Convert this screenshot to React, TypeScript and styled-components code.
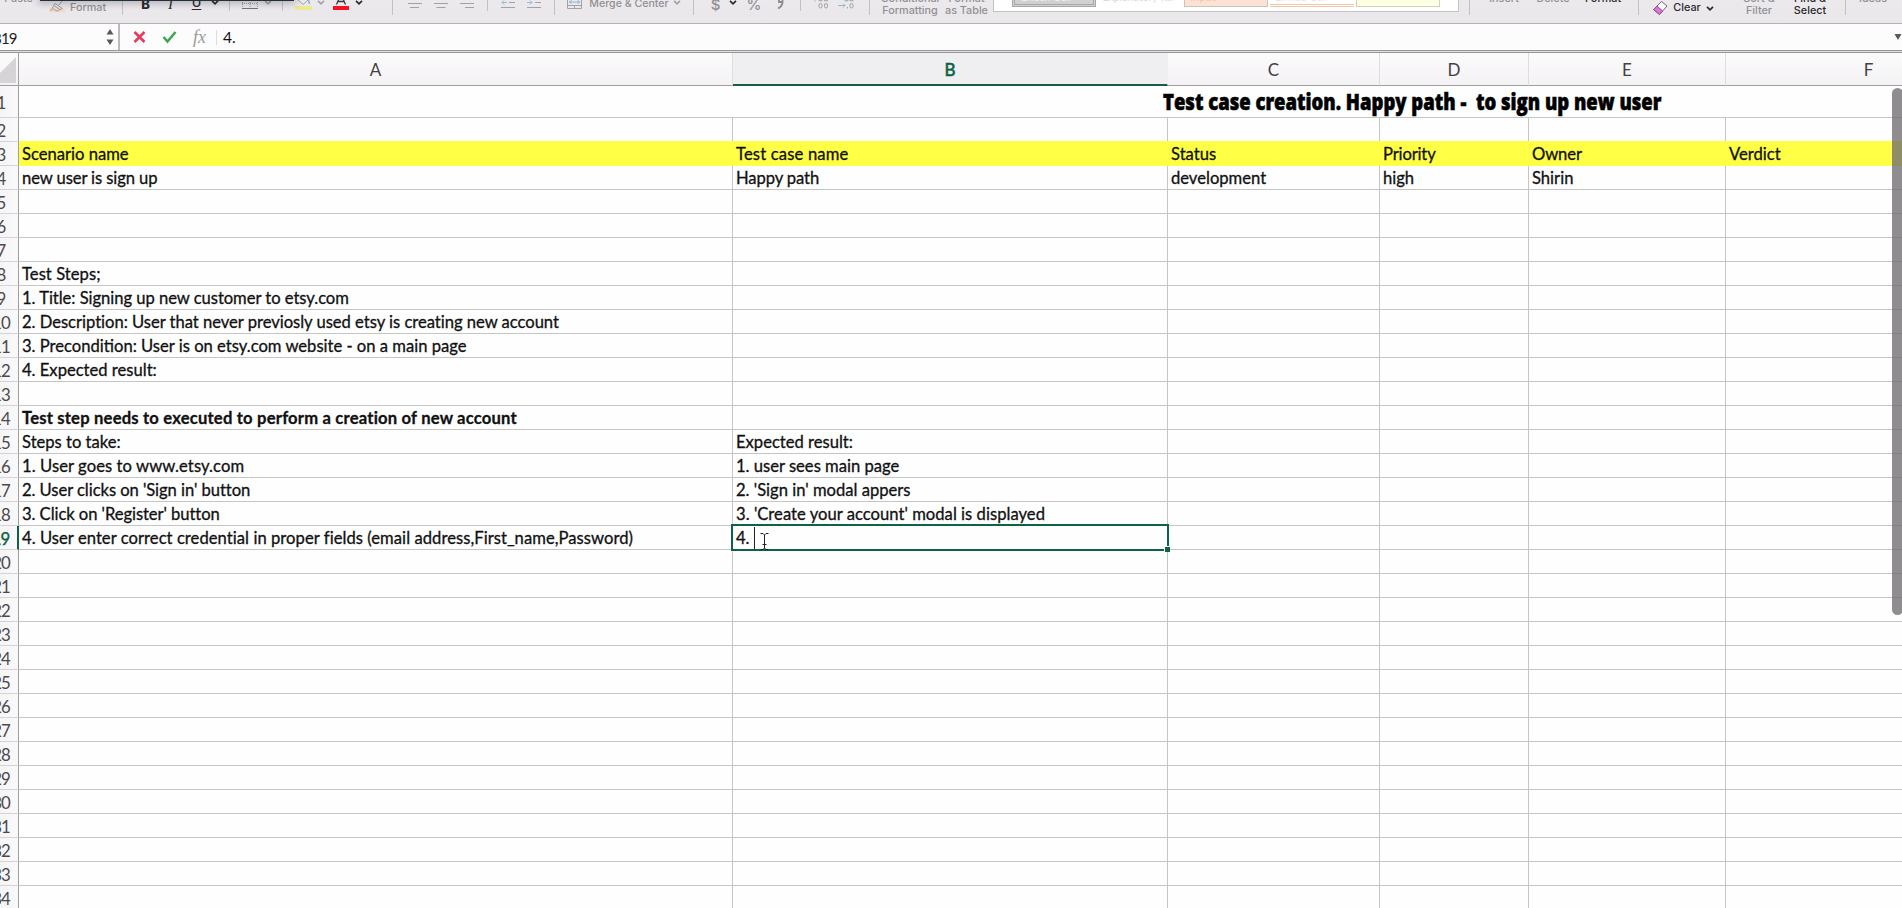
import React from 'react';
import styled, { createGlobalStyle, css } from 'styled-components';

const GREEN = '#0d6444';
const LINE = '#c6c5c6';

const GlobalStyle = createGlobalStyle`
  * { box-sizing: border-box; }
  body { margin: 0; background: #fff; overflow: hidden; }
`;

const Window = styled.div`
  position: relative;
  display: flex;
  flex-direction: column;
  width: 1902px;
  height: 908px;
  overflow: hidden;
  background: #fefefe;
  font-family: Lato, 'Liberation Sans', sans-serif;
  color: #111;
`;

/* ---------- ribbon ---------- */

const Ribbon = styled.div`
  display: flex;
  align-items: flex-end;
  flex: none;
  height: 24px;
  overflow: hidden;
  background: linear-gradient(#ebe9ec, #e9e7ea);
  border-bottom: 1px solid #b4b2b5;
`;

interface SlotProps { $gap: number; $w: number }
const slot = css<SlotProps>`
  flex: none;
  margin-left: ${p => p.$gap}px;
  width: ${p => p.$w}px;
`;

const Caption = styled.div<SlotProps & { $lift: number; $dark?: boolean; $size?: number }>`
  ${slot}
  display: flex;
  flex-direction: column;
  align-items: center;
  padding-bottom: ${p => p.$lift}px;
  font: 500 ${p => p.$size ?? 10.8}px/12px Inter, sans-serif;
  white-space: nowrap;
  color: ${p => (p.$dark ? '#2b292c' : '#929094')};
`;

const StyleLetter = styled(Caption)<{ $kind?: 'bold' | 'italic' | 'under' }>`
  font-size: 13px;
  ${p => p.$kind === 'bold' && 'font-weight: 800;'}
  ${p => p.$kind === 'italic' && "font-family: 'Liberation Serif', serif; font-style: italic; font-size: 15px;"}
  ${p => p.$kind === 'under' && 'text-decoration: underline; text-underline-offset: 2px;'}
`;

const Divider = styled.div<{ $gap: number; $short?: boolean }>`
  flex: none;
  width: 1px;
  height: ${p => (p.$short ? 11 : 15)}px;
  align-self: flex-start;
  margin-left: ${p => p.$gap}px;
  background: #c3c1c4;
`;

const Glyph = styled.svg<SlotProps>`
  ${slot}
  height: 23px;
  fill: none;
  stroke: #a3a1a5;
`;

const ChevronSvg = styled(Glyph)<{ $dark?: boolean }>`
  stroke: ${p => (p.$dark ? '#2b292c' : '#a5a3a7')};
  stroke-width: 1.7;
`;

const Chevron = ({ gap, y = 1, dark }: { gap: number; y?: number; dark?: boolean }) => (
  <ChevronSvg $gap={gap} $w={8} $dark={dark} viewBox="0 0 8 23">
    <path d={`M1 ${y - 0.2}L4 ${y + 2.8}L7 ${y - 0.2}`} />
  </ChevronSvg>
);

const Gallery = styled.div`
  display: flex;
  gap: 2px;
  flex: none;
  align-self: flex-start;
  width: 466px;
  height: 12px;
  margin-left: 5px;
  padding-left: 18px;
  background: #fff;
  border: 1px solid #c4c2c5;
  border-top: 0;
`;

const Swatch = styled.div<{ $look: 'check' | 'explain' | 'input' | 'linked' | 'note' }>`
  width: 84px;
  height: 7px;
  overflow: hidden;
  padding-left: 5px;
  font: 11px/12px Lato, sans-serif;
  white-space: nowrap;
  ${p => p.$look === 'check' && 'background:#d2d1d2; border:3px double #a8a7a8; border-top:0; color:#f1f0f1;'}
  ${p => p.$look === 'explain' && 'color:#d9d8d9; font-style:italic;'}
  ${p => p.$look === 'input' && 'background:#fde2d3; border:1px solid #c9c3c1; border-top:0; color:#f2c7ae;'}
  ${p => p.$look === 'linked' && 'border-bottom:3px double #f5c4a8; color:#fbdfce;'}
  ${p => p.$look === 'note' && 'background:#ffffe2; border:1px solid #cfcfc6; border-top:0;'}
`;

const SwatchText = styled.div`
  margin-top: -9px;
`;

const OverlayStrip = styled.div`
  position: absolute;
  left: 40px;
  top: 0;
  width: 254px;
  height: 1px;
  background: #24313d;
  box-shadow: 0 0 7px 2px rgba(30, 30, 40, 0.35);
`;

/* ---------- formula bar ---------- */

const FormulaBar = styled.div`
  display: flex;
  align-items: center;
  flex: none;
  height: 29px;
  padding-bottom: 3px;
  background: linear-gradient(#fdfcfd 26px, #989698 26px, #989698 27px, #e2e0e2 27px, #e2e0e2 28px, #989698 28px);
  font-size: 15.6px;
`;

const NameBox = styled.div`
  display: flex;
  align-items: center;
  justify-content: space-between;
  flex: none;
  width: 120px;
  height: 26px;
  padding-right: 4px;
  border-right: 2px solid #bbb9bb;
  color: #222;
`;

const CellRef = styled.span`
  margin-left: -8px;
  padding-top: 2px;
  font-size: 15px;
  letter-spacing: -0.8px;
`;

const Stepper = styled.svg`
  width: 8px;
  height: 18px;
  fill: #59575a;
`;

const BarIcon = styled.svg<SlotProps & { $color: string }>`
  ${slot}
  height: 14px;
  fill: none;
  stroke: ${p => p.$color};
  stroke-width: 2.6;
`;

const FxLabel = styled.span`
  flex: none;
  width: 22px;
  margin-left: 16px;
  font: italic 18px/22px 'Liberation Serif', serif;
  color: #9b999c;
`;

const Formula = styled.span`
  flex: 1;
  margin-left: 1px;
  padding-left: 6px;
  border-left: 1px solid #dddbdd;
  line-height: 15px;
`;

const Expand = styled.svg`
  flex: none;
  width: 8px;
  height: 8px;
  fill: #59575a;
`;

/* ---------- sheet ---------- */

const COLUMNS = '35px 714px 435px 212px 149px 197px 286px';

const Sheet = styled.div`
  position: relative;
  flex: none;
  width: 2028px;
  margin-left: -16px;
`;

const HeaderRow = styled.div`
  display: grid;
  grid-template: 33px / ${COLUMNS};
  background: linear-gradient(#fcfbfc, #f4f2f4);
`;

const ColumnHead = styled.div<{ $active?: boolean }>`
  border-right: 1px solid #dfdddf;
  border-bottom: 1px solid #a09ea0;
  text-align: center;
  font-size: 17px;
  line-height: 33px;
  color: #434144;
  ${p => p.$active && css`
    background: #efeef0;
    color: ${GREEN};
    -webkit-text-stroke: 0.6px ${GREEN};
    border-right-color: transparent;
    border-bottom: 2px solid #1a5c41;
  `}
`;

const Corner = styled.div`
  display: flex;
  justify-content: flex-end;
  padding: 4px 2px 0 0;
  border-right: 1px solid #a09ea0;
  border-bottom: 1px solid #a09ea0;
`;

const CornerMark = styled.svg`
  width: 26px;
  height: 26px;
  fill: #d6d4d7;
`;

const Row = styled.div<{ $h?: number }>`
  display: grid;
  grid-template: ${p => p.$h ?? 24}px / ${COLUMNS};
`;

const RowHead = styled.div<{ $active?: boolean }>`
  display: flex;
  align-items: center;
  justify-content: center;
  padding-top: 2px;
  background: linear-gradient(90deg, #f3f1f3, #faf9fa);
  border-right: 1px solid #a09ea0;
  border-bottom: 1px solid #d5d3d5;
  font-size: 16.8px;
  letter-spacing: -0.9px;
  color: #4b494c;
  ${p => p.$active && css`
    color: ${GREEN};
    -webkit-text-stroke: 0.4px ${GREEN};
    border-right: 2px solid ${GREEN};
  `}
`;

const Cell = styled.div<{ $fill?: boolean; $bold?: boolean; $track?: number }>`
  padding-left: 3px;
  border-right: 1px solid ${LINE};
  border-bottom: 1px solid ${LINE};
  font-size: 16.6px;
  font-weight: ${p => (p.$bold ? 700 : 400)};
  line-height: 25px;
  letter-spacing: ${p => (p.$track ? `${p.$track}px` : 'normal')};
  white-space: pre;
  -webkit-text-stroke: 0.3px #111;
  ${p => p.$fill && css`
    background: #ffff45;
    border-color: #ffff45;
    box-shadow: 0 -1px 0 #ffff45;
  `}
`;

const TitleCell = styled.div`
  grid-column: 2 / -1;
  padding-left: 1144px;
  border-bottom: 1px solid ${LINE};
`;

const Title = styled.span`
  display: inline-block;
  font: 800 22px/31px 'Open Sans', sans-serif;
  white-space: pre;
  color: #000;
  -webkit-text-stroke: 0.6px #000;
  transform: scaleX(0.84);
  transform-origin: left;
`;

const Selection = styled.div`
  position: absolute;
  left: 747px;
  top: 471px;
  width: 438px;
  height: 27px;
  border: 2px solid ${GREEN};
`;

const FillHandle = styled.div`
  position: absolute;
  right: -3px;
  bottom: -3px;
  width: 6px;
  height: 6px;
  background: ${GREEN};
  border: solid #fff;
  border-width: 1px 0 0 1px;
`;

const Caret = styled.div`
  position: absolute;
  left: 21px;
  top: 1px;
  width: 1px;
  height: 22px;
  background: #222;
`;

const Pointer = styled.svg`
  position: absolute;
  left: 27px;
  top: 7px;
  width: 9px;
  height: 17px;
  fill: none;
  stroke: #222;
`;

const Scrollbar = styled.div`
  position: absolute;
  left: 1892px;
  top: 88px;
  width: 11px;
  height: 527px;
  border-radius: 5.5px;
  background: rgba(112, 109, 111, 0.78);
`;

type Entry = string | [string, number];
const rows: Record<number, Entry[]> = {
  3: ['Scenario name', ['Test case name', 0.16], 'Status', ['Priority', -0.15], ['Owner', -0.1], 'Verdict'],
  4: [['new user is sign up', -0.1], ['Happy path', -0.1], 'development', 'high', 'Shirin'],
  8: [['Test Steps;', 0.05]],
  9: [['1. Title: Signing up new customer to etsy.com', -0.04]],
  10: [['2. Description: User that never previosly used etsy is creating new account', -0.025]],
  11: ['3. Precondition: User is on etsy.com website - on a main page'],
  12: ['4. Expected result:'],
  14: [['Test step needs to executed to perform a creation of new account', 0.2]],
  15: ['Steps to take:', 'Expected result:'],
  16: [['1. User goes to www.etsy.com', 0.08], '1. user sees main page'],
  17: [["2. User clicks on 'Sign in' button", -0.06], "2. 'Sign in' modal appers"],
  18: [["3. Click on 'Register' button", -0.06], ["3. 'Create your account' modal is displayed", 0.03]],
  19: [['4. User enter correct credential in proper fields (email address,First_name,Password)', 0.05], '4. '],
};

const rowNumbers = Array.from({ length: 33 }, (_, i) => i + 2);

function RibbonBar() {
  return (
    <Ribbon>
      <Caption $gap={4} $w={29} $lift={18}>Paste</Caption>
      <Glyph $gap={15} $w={18} viewBox="0 0 18 23">
        <path d="M1 12.500H17V9.500L12 7H7L1 9Z" fill="#f3d9cb" stroke="none" />
        <path d="M14 1L11 5M7 3.500L14.500 8.500M7 3.500L4 8.500L9 11L14.500 8.500M6.500 6L12 9.500M2 10H4" />
      </Glyph>
      <Caption $gap={4} $w={36} $lift={9}>Format</Caption>
      <Divider $gap={16} />
      <StyleLetter $gap={18} $w={9} $lift={13} $dark $kind="bold">B</StyleLetter>
      <StyleLetter $gap={16} $w={9} $lift={13} $dark $kind="italic">I</StyleLetter>
      <StyleLetter $gap={16} $w={11} $lift={15} $dark $kind="under">U</StyleLetter>
      <Chevron gap={9} dark />
      <Divider $gap={10} $short />
      <Glyph $gap={12} $w={16} viewBox="0 0 16 23">
        <path d="M.5 0V8M8 0V8M15.500 0V8M0 3.500H16" strokeDasharray="1 1" />
        <path d="M0 8.500H16" stroke="#777578" />
      </Glyph>
      <Chevron gap={6} />
      <Divider $gap={10} $short />
      <Glyph $gap={12} $w={17} viewBox="0 0 17 23">
        <path d="M3 0L8 4.500L13 0" />
        <path d="M13.500 0L14.500 4" stroke="#8bb4d4" strokeWidth="1.600" />
        <path d="M0 8H17" stroke="#ece98f" strokeWidth="4" />
      </Glyph>
      <Chevron gap={5} />
      <Glyph $gap={8} $w={16} viewBox="0 0 16 23">
        <path d="M3.500 4.500L5.500 0M12.500 4.500L10.500 0M5 1.500H11" stroke="#3a383b" strokeWidth="1.300" />
        <path d="M0 8H16" stroke="#fb0f25" strokeWidth="4" />
      </Glyph>
      <Chevron gap={6} dark />
      <Divider $gap={29} />
      <Glyph $gap={15} $w={14} viewBox="0 0 14 23"><path d="M0 3.500H14M2 7.500H11" /></Glyph>
      <Glyph $gap={12} $w={14} viewBox="0 0 14 23"><path d="M0 3.500H14M2.500 7.500H11.500" /></Glyph>
      <Glyph $gap={12} $w={14} viewBox="0 0 14 23"><path d="M0 3.500H14M5 7.500H14" /></Glyph>
      <Divider $gap={13} $short />
      <Glyph $gap={13} $w={14} viewBox="0 0 14 23">
        <path d="M8 2.500H14M0 7.500H14" /><path d="M6 2.500H1M3 .5L1 2.500L3 4.500" stroke="#9cb9cf" />
      </Glyph>
      <Glyph $gap={12} $w={14} viewBox="0 0 14 23">
        <path d="M8 2.500H14M0 7.500H14" /><path d="M0 2.500H5M3 .5L5 2.500L3 4.500" stroke="#9cb9cf" />
      </Glyph>
      <Divider $gap={13} />
      <Glyph $gap={12} $w={15} viewBox="0 0 15 23">
        <path d="M.5 0V8.500H14.500V0M.5 5.500H14.500M7.500 5.500V8.500" />
        <path d="M2 2H13M4.500 0L2.500 2L4.500 4M10.500 0L12.500 2L10.500 4" stroke="#8fb3d0" />
      </Glyph>
      <Caption $gap={7} $w={80} $lift={13} $size={10.6}>Merge &amp; Center</Caption>
      <Chevron gap={4} />
      <Divider $gap={12} />
      <Caption $gap={17} $w={9} $lift={12} $size={15}>$</Caption>
      <Chevron gap={9} dark />
      <Caption $gap={9} $w={16} $lift={12} $size={15}>%</Caption>
      <Glyph $gap={14} $w={8} viewBox="0 0 8 23">
        <path d="M6.500 0C7 4 5 7 2 8.500M3 0V2H6" strokeWidth="1.800" stroke="#8d8b8e" />
      </Glyph>
      <Divider $gap={16} $short />
      <Glyph $gap={12} $w={16} viewBox="0 0 16 23">
        <path d="M1 0L3 2" stroke="#9cc3dd" />
        <rect x="6" y="3.500" width="3" height="4.500" rx="1.500" /><rect x="11.500" y="3.500" width="3" height="4.500" rx="1.500" />
        <path d="M6 0V.8H9V0M11.500 0V.8H14.500V0" />
      </Glyph>
      <Glyph $gap={9} $w={16} viewBox="0 0 16 23">
        <path d="M0 5.500H7M5 3.500L7 5.500L5 7.500" stroke="#8fb9d6" />
        <rect x="12" y="3.500" width="3" height="4.500" rx="1.500" /><path d="M9.500 7V8.500M7 0V.8H10V0M12 0V.8H15V0" />
      </Glyph>
      <Divider $gap={15} />
      <Caption $gap={12} $w={56} $lift={6}><span>Conditional</span><span>Formatting</span></Caption>
      <Caption $gap={7} $w={43} $lift={6}><span>Format</span><span>as Table</span></Caption>
      <Gallery>
        <Swatch $look="check"><SwatchText>Check Cell</SwatchText></Swatch>
        <Swatch $look="explain"><SwatchText>Explanatory T...</SwatchText></Swatch>
        <Swatch $look="input"><SwatchText>Input</SwatchText></Swatch>
        <Swatch $look="linked"><SwatchText>Linked Cell</SwatchText></Swatch>
        <Swatch $look="note" />
      </Gallery>
      <Divider $gap={10} />
      <Caption $gap={18} $w={32} $lift={18}>Insert</Caption>
      <Caption $gap={16} $w={34} $lift={18}>Delete</Caption>
      <Caption $gap={14} $w={38} $lift={18} $dark>Format</Caption>
      <Divider $gap={16} />
      <Glyph $gap={13} $w={16} viewBox="0 0 16 23">
        <path d="M9.500 1.500L15 6L7.500 14.500L1.500 9.500Z" fill="#fff" stroke="#77607a" />
        <path d="M5 6L10.500 11L7.500 14.500L1.500 9.500Z" fill="#d978d4" stroke="#96459a" />
      </Glyph>
      <Caption $gap={6} $w={26} $lift={9} $dark>Clear</Caption>
      <Chevron gap={6} y={7} dark />
      <Caption $gap={26} $w={38} $lift={6}><span>Sort &amp;</span><span>Filter</span></Caption>
      <Caption $gap={14} $w={36} $lift={6} $dark><span>Find &amp;</span><span>Select</span></Caption>
      <Divider $gap={17} />
      <Caption $gap={13} $w={28} $lift={18}>Ideas</Caption>
    </Ribbon>
  );
}

export default function App() {
  return (
    <Window>
      <GlobalStyle />
      <RibbonBar />
      <FormulaBar>
        <NameBox>
          <CellRef>B19</CellRef>
          <Stepper viewBox="0 0 8 18"><path d="M4 1L7.500 6.500H.5ZM4 17L7.500 11.500H.5Z" /></Stepper>
        </NameBox>
        <BarIcon $gap={13} $w={13} $color="#e93a5c" viewBox="0 0 13 14"><path d="M1.500 2L11.500 12M11.500 2L1.500 12" /></BarIcon>
        <BarIcon $gap={16} $w={15} $color="#3ea552" viewBox="0 0 15 14"><path d="M1.500 7L5.500 11.500L13.500 2" /></BarIcon>
        <FxLabel>fx</FxLabel>
        <Formula>4.</Formula>
        <Expand viewBox="0 0 8 8"><path d="M.5 1H7.500L4 7Z" /></Expand>
      </FormulaBar>
      <Sheet>
        <HeaderRow>
          <Corner><CornerMark viewBox="0 0 26 26"><path d="M26 0V26H0Z" /></CornerMark></Corner>
          {['A', 'B', 'C', 'D', 'E', 'F'].map(c => <ColumnHead key={c} $active={c === 'B'}>{c}</ColumnHead>)}
        </HeaderRow>
        <Row $h={32}>
          <RowHead>1</RowHead>
          <TitleCell><Title>{'Test case creation. Happy path -  to sign up new user'}</Title></TitleCell>
        </Row>
        {rowNumbers.map(n => (
          <Row key={n}>
            <RowHead $active={n === 19}>{n}</RowHead>
            {[0, 1, 2, 3, 4, 5].map(c => {
              const entry = rows[n]?.[c];
              const [text, track] = Array.isArray(entry) ? entry : [entry, 0];
              return <Cell key={c} $fill={n === 3} $bold={n === 14} $track={track}>{text}</Cell>;
            })}
          </Row>
        ))}
        <Selection>
          <Caret />
          <Pointer viewBox="0 0 9 17"><path d="M.5 .5H3L4.500 2L6 .5H8.500M4.500 2V15M.5 16.500H3L4.500 15L6 16.500H8.500M2.500 11.500H6.500" /></Pointer>
          <FillHandle />
        </Selection>
      </Sheet>
      <Scrollbar />
      <OverlayStrip />
    </Window>
  );
}
